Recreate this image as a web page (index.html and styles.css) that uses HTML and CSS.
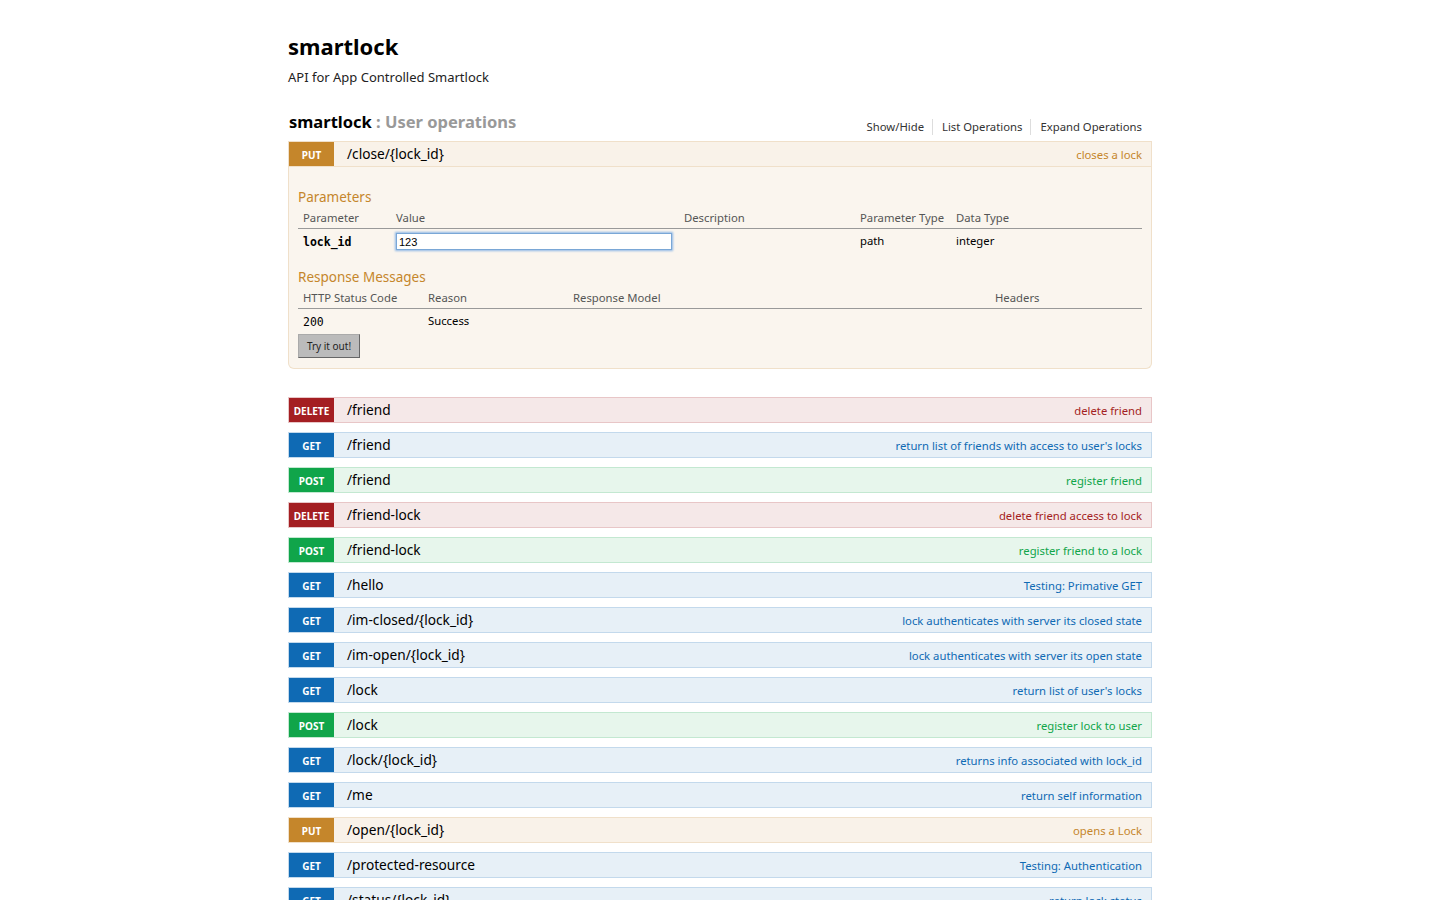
FILE: index.html
```html
<!DOCTYPE html>
<html>
<head>
<meta charset="utf-8">
<title>smartlock</title>
<link rel="stylesheet" href="styles.css">
</head>
<body>
<div class="container">
  <div class="info">
    <h1 class="info-title">smartlock</h1>
    <div class="info-desc">API for App Controlled Smartlock</div>
  </div>

  <div class="resource">
    <div class="res-heading">
      <h2><span class="res-name">smartlock</span> <span class="res-sub">: User operations</span></h2>
      <ul class="res-links">
        <li>Show/Hide</li>
        <li>List Operations</li>
        <li class="last">Expand Operations</li>
      </ul>
    </div>

    <ul class="ops">
      <li class="op put expanded">
        <div class="op-head"><span class="badge">PUT</span><span class="path">/close/{lock_id}</span><span class="summary">closes a lock</span></div>
        <div class="op-content">
          <h4>Parameters</h4>
          <table class="params">
            <thead><tr><th class="c1">Parameter</th><th class="c2">Value</th><th class="c3">Description</th><th class="c4">Parameter Type</th><th class="c5">Data Type</th></tr></thead>
            <tbody><tr><td class="code">lock_id</td><td class="inp"><input class="val" type="text" value="123"></td><td></td><td>path</td><td>integer</td></tr></tbody>
          </table>
          <h4 class="resp-h">Response Messages</h4>
          <table class="resp">
            <thead><tr><th class="r1">HTTP Status Code</th><th class="r2">Reason</th><th class="r3">Response Model</th><th class="r4">Headers</th></tr></thead>
            <tbody><tr><td class="code plain">200</td><td>Success</td><td></td><td></td></tr></tbody>
          </table>
          <button class="try">Try it out!</button>
        </div>
      </li>
      <li class="op delete"><div class="op-head"><span class="badge">DELETE</span><span class="path">/friend</span><span class="summary">delete friend</span></div></li>
      <li class="op get"><div class="op-head"><span class="badge">GET</span><span class="path">/friend</span><span class="summary">return list of friends with access to user's locks</span></div></li>
      <li class="op post"><div class="op-head"><span class="badge">POST</span><span class="path">/friend</span><span class="summary">register friend</span></div></li>
      <li class="op delete"><div class="op-head"><span class="badge">DELETE</span><span class="path">/friend-lock</span><span class="summary">delete friend access to lock</span></div></li>
      <li class="op post"><div class="op-head"><span class="badge">POST</span><span class="path">/friend-lock</span><span class="summary">register friend to a lock</span></div></li>
      <li class="op get"><div class="op-head"><span class="badge">GET</span><span class="path">/hello</span><span class="summary">Testing: Primative GET</span></div></li>
      <li class="op get"><div class="op-head"><span class="badge">GET</span><span class="path">/im-closed/{lock_id}</span><span class="summary">lock authenticates with server its closed state</span></div></li>
      <li class="op get"><div class="op-head"><span class="badge">GET</span><span class="path">/im-open/{lock_id}</span><span class="summary">lock authenticates with server its open state</span></div></li>
      <li class="op get"><div class="op-head"><span class="badge">GET</span><span class="path">/lock</span><span class="summary">return list of user's locks</span></div></li>
      <li class="op post"><div class="op-head"><span class="badge">POST</span><span class="path">/lock</span><span class="summary">register lock to user</span></div></li>
      <li class="op get"><div class="op-head"><span class="badge">GET</span><span class="path">/lock/{lock_id}</span><span class="summary">returns info associated with lock_id</span></div></li>
      <li class="op get"><div class="op-head"><span class="badge">GET</span><span class="path">/me</span><span class="summary">return self information</span></div></li>
      <li class="op put"><div class="op-head"><span class="badge">PUT</span><span class="path">/open/{lock_id}</span><span class="summary">opens a Lock</span></div></li>
      <li class="op get"><div class="op-head"><span class="badge">GET</span><span class="path">/protected-resource</span><span class="summary">Testing: Authentication</span></div></li>
      <li class="op get"><div class="op-head"><span class="badge">GET</span><span class="path">/status/{lock_id}</span><span class="summary">return lock status</span></div></li>
    </ul>
  </div>
</div>
</body>
</html>
```
FILE: styles.css
```css
* { box-sizing: border-box; }
html, body { margin: 0; padding: 0; background: #fff; }
body {
  font-family: "Noto Sans", "Open Sans", "DejaVu Sans", sans-serif;
  color: #000;
  font-size: 13px;
}
.container {
  width: 864px;
  margin: 0 auto;
  padding-top: 30px;
}
.info-title {
  margin: 0;
  font-size: 22px;
  line-height: 32px;
  font-weight: 700;
  color: #000;
}
.info-desc {
  margin-top: 4px;
  font-size: 13px;
  line-height: 22px;
  color: #222;
}
.resource { margin-top: 19px; }
.res-heading {
  display: flex;
  justify-content: space-between;
  align-items: flex-end;
  padding: 0 10px 0 1px;
  height: 31px;
}
.res-heading h2 {
  margin: 0;
  padding-bottom: 1px;
  font-size: 16.5px;
  line-height: 30px;
  font-weight: 700;
}
.res-name { color: #000; }
.res-sub { color: #999; }
.res-links {
  list-style: none;
  margin: 0;
  padding: 0 0 3px 0;
  display: flex;
  font-size: 11.3px;
  line-height: 16px;
  color: #333;
}
.res-links li {
  padding: 0 8px 0 9px;
  border-right: 1px solid #ddd;
}
.res-links li.last { border-right: none; padding-right: 0; }

.ops { list-style: none; margin: 3px 0 0 0; padding: 0; }
.op { margin-bottom: 9px; }
.op.expanded { margin-bottom: 28px; }
.op-head {
  display: flex;
  align-items: center;
  height: 26px;
  border: 1px solid;
}
.badge {
  width: 45px;
  height: 24px;
  display: flex;
  align-items: center;
  justify-content: center;
  color: #fff;
  font-size: 10px;
  font-weight: 700;
  padding-top: 2px;
}
.path {
  margin-left: 13px;
  font-size: 13.7px;
  color: #000;
  flex: 1;
  padding-bottom: 2px;
}
.summary {
  font-size: 11.3px;
  padding-right: 9px;
  padding-top: 0;
}

.delete .op-head { background: #f5e8e8; border-color: #e8c6c7; }
.delete .badge { background: #a41e22; }
.delete .summary { color: #a41e22; }
.get .op-head { background: #e7f0f7; border-color: #c3d9ec; }
.get .badge { background: #0f6ab4; }
.get .summary { color: #0f6ab4; }
.post .op-head { background: #e7f6ec; border-color: #c3e8d1; }
.post .badge { background: #10a54a; }
.post .summary { color: #10a54a; }
.put .op-head { background: #f9f2e9; border-color: #f0e0ca; }
.put .badge { background: #c5862b; }
.put .summary { color: #c5862b; }

.op-content {
  background: #faf5ee;
  border: 1px solid #f0e0ca;
  border-top: none;
  border-radius: 0 0 6px 6px;
  padding: 20px 9px 10px 9px;
}
.op-content h4 {
  margin: 0;
  font-size: 13.5px;
  line-height: 20px;
  font-weight: 400;
  color: #c5862b;
}
.op-content h4.resp-h { margin-top: 15px; }
table {
  border-collapse: collapse;
  width: 100%;
  table-layout: fixed;
}
th {
  text-align: left;
  font-weight: 400;
  font-size: 11.3px;
  color: #555;
  padding: 0 5px;
  height: 21px;
  border-bottom: 1px solid #999;
  vertical-align: middle;
  white-space: nowrap;
}
td {
  font-size: 11.3px;
  color: #000;
  padding: 1px 5px 0 5px;
  height: 24px;
  vertical-align: middle;
}
td.code { padding-top: 4px; }
td.inp { padding-top: 3px; }
.c1 { width: 93px; }
.c2 { width: 288px; }
.c3 { width: 176px; }
.c4 { width: 96px; }
.r1 { width: 125px; }
.r2 { width: 145px; }
.r3 { width: 422px; }
td.code {
  font-family: "DejaVu Sans Mono", "Liberation Mono", monospace;
  font-weight: 700;
  font-size: 11.5px;
}
td.code.plain { font-weight: 400; }
.val {
  display: block;
  width: 276px;
  height: 17px;
  margin: 0;
  padding: 1px 2px;
  font-family: "Liberation Sans", Arial, sans-serif;
  font-size: 11px;
  color: #000;
  background: #fff;
  border: 1px solid #7aa7d6;
  box-shadow: 0 0 2px 1px #8fb8e6;
  outline: none;
}
.try {
  display: block;
  margin-top: 2px;
  width: 62px;
  height: 24px;
  padding: 0;
  background: #bbb;
  border: 1px solid #aaa;
  border-right-color: #666;
  border-bottom-color: #666;
  font-family: "Noto Sans", "Open Sans", sans-serif;
  font-size: 10px;
  color: #222;
  cursor: pointer;
}
```
